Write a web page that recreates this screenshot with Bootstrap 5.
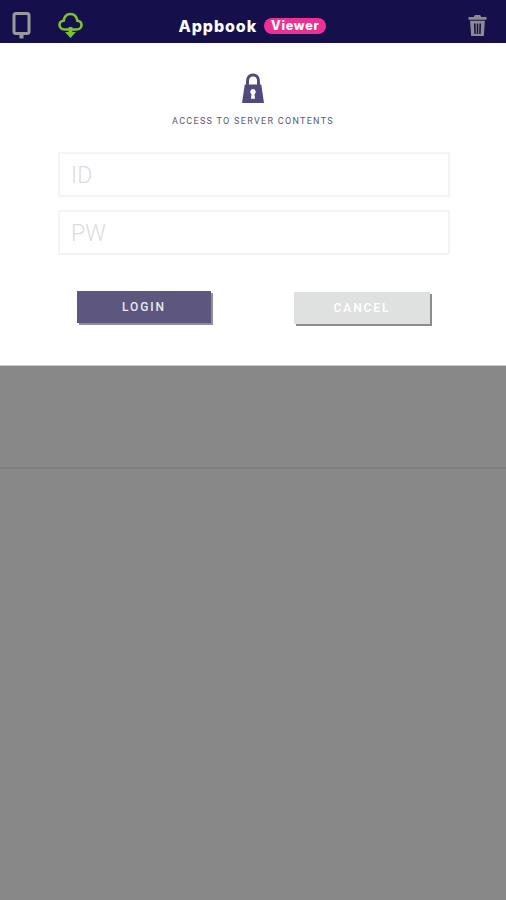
<!DOCTYPE html>
<html lang="en">
<head>
  <meta charset="UTF-8">
  <meta name="viewport" content="width=device-width, initial-scale=1.0">
  <title>Appbook Viewer</title>
  <link href="https://cdn.jsdelivr.net/npm/bootstrap@5.3.3/dist/css/bootstrap.min.css" rel="stylesheet">
  <style>
    html, body { height: 100%; }
    body {
      background-color: #888888;
      font-family: Roboto, "Liberation Sans", sans-serif;
      overflow: hidden;
    }
    .app-bar {
      height: 43px;
      background-color: #15104c;
      padding: 8px 19px 0 12px;
    }
    .bar-side { width: 71px; }
    .bar-side svg { display: block; }
    .phone-icon { margin-right: 27px; }
    .brand-name {
      font-family: Inter, "Liberation Sans", sans-serif;
      font-weight: 800;
      font-size: 16px;
      color: #fff;
      letter-spacing: .9px;
    }
    .viewer-tag {
      font-family: Inter, "Liberation Sans", sans-serif;
      font-weight: 800;
      font-size: 12.5px;
      line-height: 16px;
      color: #fff;
      background-color: #ee3095;
      border-radius: 8px;
      padding: 0 7px;
      letter-spacing: .75px;
    }
    .brand-wrap { gap: 7px; margin-left: 6px; }
    .login-panel {
      height: 323px;
      background-color: #fff;
      padding-top: 30px;
      border-bottom: 1px solid #c9c9c9;
    }
    .access-text {
      font-size: 9px;
      letter-spacing: 1.3px;
      color: #5b5870;
      margin-top: 12px;
      line-height: 12px;
    }
    .cred-box {
      width: 392px;
      height: 45px;
      margin-left: 58px;
      border: 2px solid #f4f4f4;
      border-radius: 0;
      padding: 2px 11px 0;
      font-size: 23px;
      font-weight: 300;
      box-shadow: none;
    }
    .cred-box::placeholder { color: #dcdcdc; opacity: 1; }
    .first-box { margin-top: 25px; margin-bottom: 13px; }
    .btn-row {
      margin-top: 36px;
      padding: 0 76px 0 77px;
    }
    .act-btn {
      width: 134px;
      height: 32px;
      border: 0;
      border-radius: 0;
      padding: 0;
      font-size: 12px;
      font-weight: 500;
      letter-spacing: 1.9px;
      color: #fff;
    }
    .act-login, .act-login:hover {
      background-color: #5d567f;
      color: #e9e8ef;
      box-shadow: 2px 2px 0 #8f8f96;
    }
    .act-cancel, .act-cancel:hover {
      width: 136px;
      background-color: #dfe1e0;
      color: #fff;
      margin-top: 1px;
      box-shadow: 2px 2px 0 #8c8c8c;
    }
    .under-line {
      height: 2px;
      margin-top: 101px;
      background-color: #7f7f7f;
    }
  </style>
</head>
<body>
  <!-- top bar -->
  <header class="app-bar d-flex align-items-center justify-content-between">
    <div class="bar-side d-flex align-items-center">
      <svg class="phone-icon" width="19" height="27" viewBox="0 0 19 27" fill="none">
        <rect x="2" y="1.5" width="15" height="20" rx="2" stroke="#9a9a9e" stroke-width="3"/>
        <rect x="7.5" y="21" width="4" height="5.5" fill="#9a9a9e"/>
      </svg>
      <svg width="25" height="27" viewBox="0 0 25 27" fill="none">
        <path d="M6.5 17.5C3.4 17.5 1.5 15.4 1.5 13C1.5 10.6 3.3 8.9 5.6 8.8C6.3 4.6 9 2 12.5 2C16 2 18.7 4.6 19.4 8.8C21.7 8.9 23.5 10.6 23.5 13C23.5 15.4 21.6 17.5 18.5 17.5Z" stroke="#7fc031" stroke-width="2.6"/>
        <path d="M10.6 15H14.4V20H18L12.5 26L7 20H10.6Z" fill="#7fc031"/>
      </svg>
    </div>
    <div class="brand-wrap d-flex align-items-center">
      <span class="brand-name">Appbook</span>
      <span class="viewer-tag">Viewer</span>
    </div>
    <div class="bar-side d-flex justify-content-end">
      <svg width="19" height="21" viewBox="0 0 18 20" fill="#8c8c90" preserveAspectRatio="none">
        <path d="M6.5 0H11.5L12.5 2H17.5V4.5H.5V2H5.5Z"/>
        <path d="M2 5.5H16L15 20H3ZM5.6 8L6 18H7.4L7.2 8ZM8.3 8V18H9.7V8ZM10.8 8L10.6 18H12L12.4 8Z" fill-rule="evenodd"/>
      </svg>
    </div>
  </header>

  <!-- login form -->
  <section class="login-panel">
    <div class="d-flex flex-column align-items-center">
      <svg width="22" height="30" viewBox="0 0 24 31" preserveAspectRatio="none">
        <path d="M6 14V8.5C6 4.6 8.4 2 12 2C15.6 2 18 4.6 18 8.5V14" fill="none" stroke="#514a7c" stroke-width="3.2"/>
        <path fill-rule="evenodd" fill="#514a7c" d="M3 12H21L24 31H0ZM12 16.5A3 3 0 0 0 10.4 22L9.8 26.5H14.2L13.6 22A3 3 0 0 0 12 16.5Z"/>
      </svg>
      <div class="access-text">ACCESS TO SERVER CONTENTS</div>
    </div>
    <form>
      <input type="text" class="form-control cred-box first-box" placeholder="ID">
      <input type="password" class="form-control cred-box" placeholder="PW">
      <div class="btn-row d-flex justify-content-between align-items-start">
        <button type="button" class="btn act-btn act-login">LOGIN</button>
        <button type="button" class="btn act-btn act-cancel">CANCEL</button>
      </div>
    </form>
  </section>
  <div class="under-line"></div>

  <script src="https://cdn.jsdelivr.net/npm/bootstrap@5.3.3/dist/js/bootstrap.bundle.min.js"></script>
</body>
</html>
